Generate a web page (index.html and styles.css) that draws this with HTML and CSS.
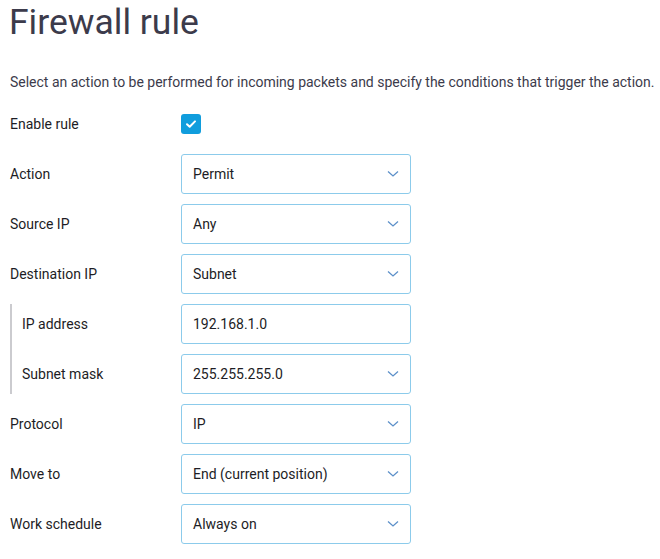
FILE: index.html
```html
<!DOCTYPE html>
<html lang="en">
<head>
    <meta charset="UTF-8">
    <meta name="viewport" content="width=device-width, initial-scale=1.0">
    <title>Firewall rule</title>
    <link rel="stylesheet" href="styles.css">
</head>
<body>
    <h1>Firewall rule</h1>
    <p class="intro">Select an action to be performed for incoming packets and specify the conditions that trigger the action.</p>

    <form class="rule-form">
        <div class="row row-check">
            <label for="enabled">Enable rule</label>
            <input type="checkbox" id="enabled" class="check" checked>
        </div>

        <div class="row">
            <label>Action</label>
            <div class="select">Permit</div>
        </div>

        <div class="row">
            <label>Source IP</label>
            <div class="select">Any</div>
        </div>

        <div class="row">
            <label>Destination IP</label>
            <div class="select">Subnet</div>
        </div>

        <div class="subgroup">
            <div class="row">
                <label for="ip">IP address</label>
                <input type="text" id="ip" class="field" value="192.168.1.0">
            </div>
            <div class="row">
                <label>Subnet mask</label>
                <div class="select">255.255.255.0</div>
            </div>
        </div>

        <div class="row">
            <label>Protocol</label>
            <div class="select">IP</div>
        </div>

        <div class="row">
            <label>Move to</label>
            <div class="select">End (current position)</div>
        </div>

        <div class="row">
            <label>Work schedule</label>
            <div class="select">Always on</div>
        </div>
    </form>
</body>
</html>
```

FILE: styles.css
```css
body {
    font-family: Roboto, "Noto Sans", sans-serif;
    color: #1d1d25;
    margin: 0;
    padding: 0 10px;
}
h1 {
    font-size: 35.5px;
    font-weight: 400;
    color: #3c3b4b;
    margin: 0 0 0 -1px;
    padding-top: 2px;
    line-height: 40px;
}
.intro {
    font-size: 14px;
    color: #3c3b4b;
    margin: 31px -10px 0 0;
    line-height: 18px;
    white-space: nowrap;
    letter-spacing: -0.01px;
}
.rule-form {
    display: flex;
    flex-direction: column;
    gap: 10px;
    margin-top: 13px;
}
.row {
    display: grid;
    grid-template-columns: 171px 230px;
    align-items: center;
    height: 40px;
    font-size: 14px;
}
.row-check {
    height: 40px;
}
.row label {
    display: block;
}
.subgroup {
    display: flex;
    flex-direction: column;
    gap: 10px;
    border-left: 2px solid #cbcbcf;
    padding-left: 10px;
}
.subgroup .row {
    grid-template-columns: 159px 230px;
}
.check {
    appearance: none;
    margin: 0;
    width: 20px;
    height: 20px;
    border-radius: 3px;
    background: #109ddd url("data:image/svg+xml,%3Csvg xmlns='http://www.w3.org/2000/svg' width='20' height='20'%3E%3Cpath d='M6 10.2l2.7 2.6L14 7.4' fill='none' stroke='white' stroke-width='2' stroke-linecap='round' stroke-linejoin='round'/%3E%3C/svg%3E") no-repeat center;
}
.select, .field {
    box-sizing: border-box;
    height: 40px;
    border: 1px solid #8ccbeb;
    border-radius: 3px;
    padding: 0 11px;
    font: inherit;
    font-size: 14px;
    color: #1d1d25;
    display: flex;
    align-items: center;
    width: 230px;
}
.select {
    background: url("data:image/svg+xml,%3Csvg xmlns='http://www.w3.org/2000/svg' width='12' height='8'%3E%3Cpath d='M1 1.5l5 4.5 5-4.5' fill='none' stroke='%235d90c9' stroke-width='1.3'/%3E%3C/svg%3E") no-repeat right 11px center;
}
.field {
    outline: none;
}
```
